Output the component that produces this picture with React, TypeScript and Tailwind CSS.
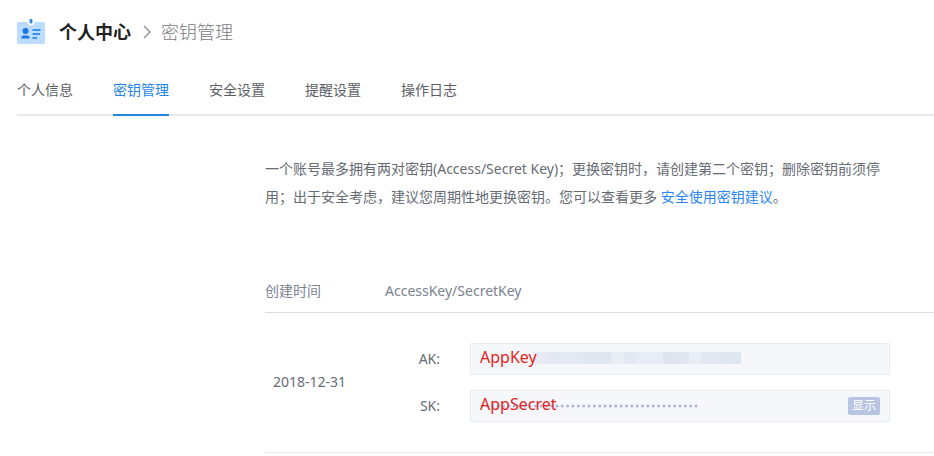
const tabs = ["个人信息", "密钥管理", "安全设置", "提醒设置", "操作日志"];

const mosaic = [
  "bg-[#e7ebf3]",
  "bg-[#e3e8f1]",
  "bg-[#e5e9f2]",
  "bg-[#e3e8f2]",
  "bg-[#e0e6f0]",
  "bg-[#e0e6f0]",
  "bg-[#e9edf4]",
  "bg-[#e4e8f2]",
  "bg-[#e8ecf4]",
  "bg-[#e8ecf4]",
  "bg-[#dfe4ef]",
  "bg-[#e1e5ef]",
  "bg-[#e9edf4]",
  "bg-[#e3e7f1]",
  "bg-[#e1e6f0]",
  "bg-[#e0e6f0]",
];

function BadgeIcon() {
  return (
    <svg width="28" height="28" viewBox="0 0 28 28" aria-hidden="true">
      <rect y="4" width="28" height="22" rx="2" fill="#bbdcff" />
      <circle cx="14" cy="4" r="3.6" fill="#fff" />
      <rect x="12.6" y="1" width="2.8" height="4.4" rx="1" fill="#2f84dc" />
      <circle cx="8.5" cy="13" r="3" fill="#1878e8" />
      <path d="M4.5 20.5v-1.200c0-1 1-1.800 2.200-1.800h3.600c1.200 0 2.200.8 2.200 1.800v1.200z" fill="#1878e8" />
      <path d="M15.500 12h8M15.500 16h7.500M15.500 20h4.500" stroke="#3d91ee" strokeWidth="1.8" />
    </svg>
  );
}

function Header() {
  return (
    <header className="flex h-8 items-center">
      <BadgeIcon />
      <h1 className="ml-3.5 text-lg leading-7 font-bold text-[#222]">个人中心</h1>
      <svg width="8" height="14" viewBox="0 0 8 14" className="mr-2.5 ml-3" fill="none" aria-hidden="true">
        <path d="M1 1l6 6-6 6" stroke="#888b90" strokeWidth="1.3" />
      </svg>
      <span className="text-lg leading-7 font-light text-[#777a80]">密钥管理</span>
    </header>
  );
}

const inputClass =
  "relative block h-8 w-full rounded-xs border border-[#e8ebf2] px-[9px] pb-1 text-base text-[#e3231d] outline-none";

function KeyTable() {
  return (
    <table className="mt-[59px] w-full text-left">
      <thead className="text-[#7c8291]">
        <tr className="h-[42px] border-b border-[#d9dbe0]">
          <th className="w-30 font-normal">创建时间</th>
          <th className="font-normal">AccessKey/SecretKey</th>
        </tr>
      </thead>
      <tbody>
        <tr className="border-b border-[#e6e7ea]">
          <td className="pl-2">2018-12-31</td>
          <td className="py-[30px]">
            <div className="flex flex-col gap-[15px]">
              <div className="flex items-center">
                <label htmlFor="ak" className="w-[55px] text-right">
                  AK:
                </label>
                <div className="relative ml-[30px] w-[420px] bg-[#f5f7fb]">
                  <div className="absolute top-[9px] left-[63px] flex">
                    {mosaic.map((c, i) => (
                      <span key={i} className={`h-3 w-[13px] ${c}`} />
                    ))}
                  </div>
                  <input id="ak" readOnly value="AppKey" className={inputClass} />
                </div>
              </div>
              <div className="flex items-center">
                <label htmlFor="sk" className="w-[55px] text-right">
                  SK:
                </label>
                <div className="relative ml-[30px] w-[420px] bg-[#f5f7fb]">
                  <svg width="220" height="4" className="absolute top-3.5 left-2.5" aria-hidden="true">
                    <line x1="2" y1="2" x2="218" y2="2" stroke="#adb7d3" strokeWidth="3" strokeLinecap="round" strokeDasharray="0 5.35" />
                  </svg>
                  <input id="sk" readOnly value="AppSecret" className={inputClass} />
                  <button className="absolute top-[7px] right-2.5 h-[18px] rounded-xs bg-[#b7c4e2] px-1 text-xs leading-[18px] text-white">
                    显示
                  </button>
                </div>
              </div>
            </div>
          </td>
        </tr>
      </tbody>
    </table>
  );
}

export default function App() {
  return (
    <div className="min-h-screen overflow-x-hidden bg-white pt-4 pl-[17px] font-['Noto_Sans','Noto_Sans_CJK_SC',sans-serif] text-sm text-[#666c74]">
      <Header />
      <nav className="mt-5 flex gap-10 border-b-2 border-[#e7e8ec]">
        {tabs.map((tab) => (
          <a
            key={tab}
            href="#"
            className={
              tab === "密钥管理"
                ? "-mb-0.5 border-b-2 border-[#2484e4] pt-3 pb-3.5 text-[#2484e4]"
                : "pt-3 pb-3.5 text-[#5c6066]"
            }
          >
            {tab}
          </a>
        ))}
      </nav>
      <main className="mt-[39px] ml-[248px]">
        <p className="max-w-[625px] leading-7">
          一个账号最多拥有两对密钥(Access/Secret Key)；更换密钥时，请创建第二个密钥；删除密钥前须停用；出于安全考虑，建议您周期性地更换密钥。您可以查看更多{" "}
          <a href="#" className="text-[#2b85f3]">
            安全使用密钥建议
          </a>
          。
        </p>
        <KeyTable />
      </main>
    </div>
  );
}
